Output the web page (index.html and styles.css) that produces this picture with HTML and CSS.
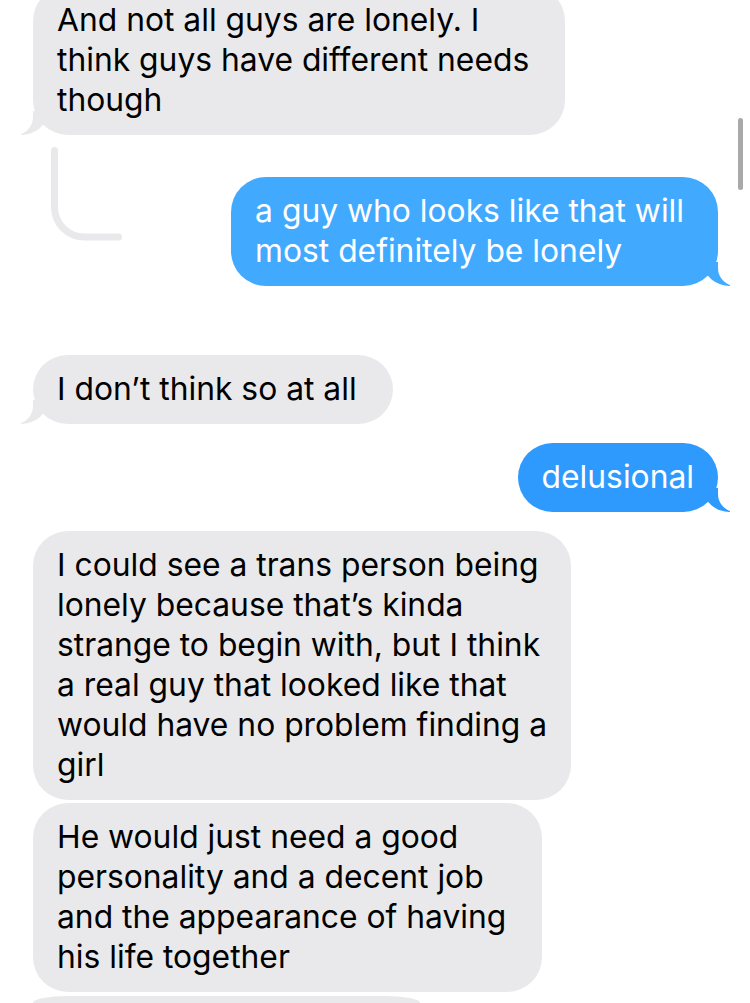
FILE: index.html
```html
<!DOCTYPE html>
<html lang="en">
<head>
  <meta charset="UTF-8" />
  <meta name="viewport" content="width=device-width, initial-scale=1.0"/>
  <title>Messages</title>
  <link rel="stylesheet" href="styles.css">
</head>
<body>
  <div class="chat">
    <div class="bubble them tail first">And not all guys are lonely. I<br>think guys have different needs<br>though</div>

    <div class="reply-row">
      <svg class="thread" width="92" height="96" viewBox="0 0 92 96">
        <path d="M21.5 3.5 V60 A30 30 0 0 0 51.5 90 H85.5" fill="none" stroke="#e9e9eb" stroke-width="7" stroke-linecap="round"/>
      </svg>
      <div class="bubble me tail light">a guy who looks like that will<br>most definitely be lonely</div>
    </div>

    <div class="bubble them tail gap-big">I don’t think so at all</div>

    <div class="bubble me tail dark gap snug">delusional</div>

    <div class="bubble them gap snug">I could see a trans person being<br>lonely because that’s kinda<br>strange to begin with, but I think<br>a real guy that looked like that<br>would have no problem finding a<br>girl</div>

    <div class="bubble them gap-small">He would just need a good<br>personality and a decent job<br>and the appearance of having<br>his life together</div>

    <div class="bubble them partial"></div>
  </div>

  <div class="scrollbar"></div>
</body>
</html>
```
FILE: styles.css
```css
body {
  margin: 0;
  background: #fff;
  font-family: Inter, "Noto Sans", sans-serif;
  overflow: hidden;
  height: 1003px;
}
.chat {
  display: flex;
  flex-direction: column;
  padding: 0 32px 0 33px;
}
.bubble {
  position: relative;
  font-size: 31.8px;
  line-height: 40px;
  padding: 14px 36px 15px 24px;
  border-radius: 35px;
  white-space: nowrap;
}
.snug {
  padding-right: 24px;
}
.them {
  align-self: flex-start;
  background: #e9e9eb;
  color: #000;
}
.me {
  align-self: flex-end;
  color: #fff;
}
.me.light {
  padding-right: 34px;
  background: #41aaff;
}
.dark {
  background: #2f9afd;
}
.first {
  margin-top: -14px;
}
.gap-big {
  margin-top: 69px;
}
.gap {
  margin-top: 19px;
}
.gap-small {
  margin-top: 3px;
}
.partial {
  width: 339px;
  height: 7px;
  margin-top: 4px;
  padding: 0 24px;
  border-radius: 35px 35px 0 0 / 7px 7px 0 0;
}

/* tails */
.tail::before,
.tail::after {
  content: "";
  position: absolute;
  bottom: 0;
}
.them.tail::before {
  left: -12px;
  width: 26px;
  height: 24px;
  background: #e9e9eb;
  border-bottom-right-radius: 26px 22px;
}
.them.tail::after {
  left: -40px;
  width: 40px;
  height: 26px;
  background: #fff;
  border-bottom-right-radius: 18px;
}
.me.tail::before {
  right: -12px;
  width: 26px;
  height: 24px;
  background: inherit;
  border-bottom-left-radius: 26px 22px;
}
.me.tail::after {
  right: -40px;
  width: 40px;
  height: 26px;
  background: #fff;
  border-bottom-left-radius: 18px;
}

.reply-row {
  display: flex;
  justify-content: space-between;
  align-items: flex-start;
  margin-top: 12px;
}
.reply-row .bubble {
  margin-top: 30px;
}
.thread {
  display: block;
}

.scrollbar {
  position: absolute;
  top: 118px;
  right: 7px;
  width: 5px;
  height: 72px;
  border-radius: 3px;
  background: #a9a9a9;
}
```
